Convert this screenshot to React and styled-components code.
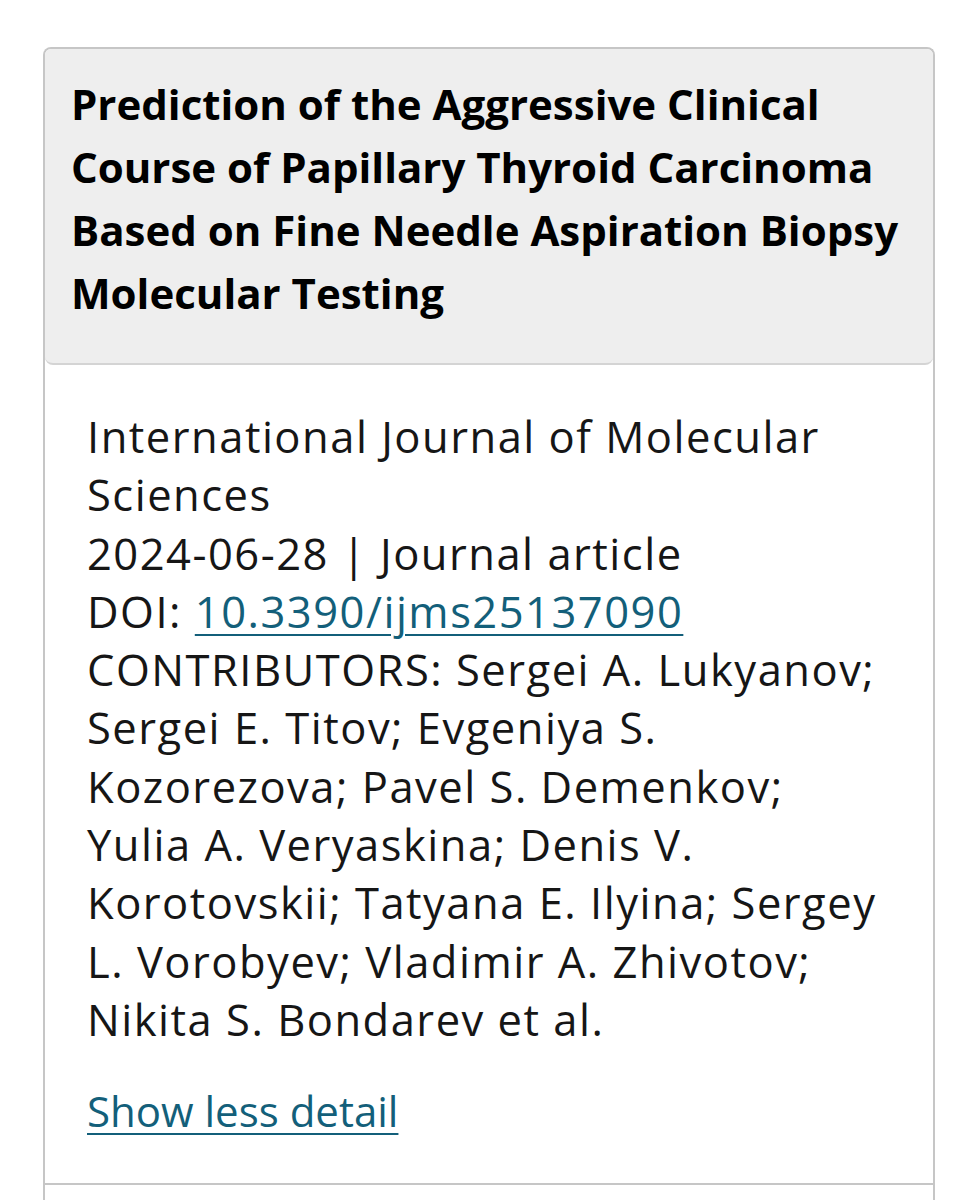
import styled, { createGlobalStyle } from "styled-components";

const GlobalStyle = createGlobalStyle`
  html, body {
    margin: 0;
    padding: 0;
    background: #fff;
  }
  body {
    font-family: "Open Sans", "Noto Sans", sans-serif;
  }
`;

const Page = styled.div`
  padding: 47px 41px 0 43px;
`;

const Card = styled.div`
  border: 2px solid #c6c6c6;
  border-bottom: none;
  border-radius: 8px 8px 0 0;
  overflow: hidden;
`;

const Header = styled.div`
  background: #eeeeee;
  border-bottom: 2px solid #d4d4d4;
  border-radius: 0 0 8px 8px;
  padding: 23px 26px 39px 26px;
`;

const Title = styled.h2`
  margin: 0;
  font-size: 42px;
  line-height: 63px;
  font-weight: 700;
  color: #000;
`;

const Body = styled.div`
  padding: 43px 40px 43px 42px;
  border-bottom: 2px solid #c6c6c6;
`;

const Line = styled.div`
  font-size: 43.5px;
  line-height: 58.3px;
  letter-spacing: 1.5px;
  color: #161616;
`;

const Link = styled.a`
  color: #135f7a;
  text-decoration: underline;
  text-decoration-thickness: 2px;
  text-underline-offset: 6px;
  cursor: pointer;
`;

const Toggle = styled.div`
  margin-top: 33px;
  font-size: 42px;
  line-height: 58px;
`;

const Next = styled.div`
  height: 60px;
`;

export default function App() {
  return (
    <>
      <GlobalStyle />
      <Page>
        <Card>
          <Header>
            <Title>
              Prediction of the Aggressive Clinical Course of Papillary Thyroid
              Carcinoma Based on Fine Needle Aspiration Biopsy Molecular Testing
            </Title>
          </Header>
          <Body>
            <Line>International Journal of Molecular Sciences</Line>
            <Line>2024-06-28 | Journal article</Line>
            <Line>
              DOI: <Link href="#">10.3390/ijms25137090</Link>
            </Line>
            <Line>
              CONTRIBUTORS: Sergei A. Lukyanov; Sergei E. Titov; Evgeniya S.
              Kozorezova; Pavel S. Demenkov; Yulia A. Veryaskina; Denis V.
              Korotovskii; Tatyana E. Ilyina; Sergey L. Vorobyev; Vladimir A.
              Zhivotov; Nikita S. Bondarev et al.
            </Line>
            <Toggle>
              <Link href="#">Show less detail</Link>
            </Toggle>
          </Body>
          <Next />
        </Card>
      </Page>
    </>
  );
}
